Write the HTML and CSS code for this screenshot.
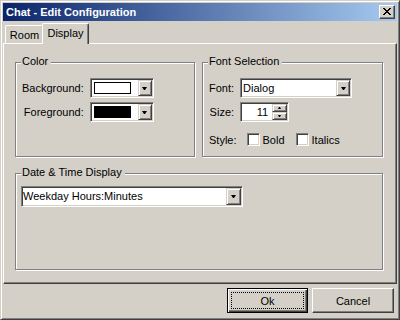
FILE: index.html
```html
<!DOCTYPE html>
<html lang="en">
<head>
  <meta charset="UTF-8">
  <title>Chat - Edit Configuration</title>
  <link rel="stylesheet" href="styles.css">
</head>
<body>
  <div class="window">
    <div class="titlebar">
      <span class="title">Chat - Edit Configuration</span>
      <span class="close">
        <svg width="8" height="7" viewBox="0 0 8 7"><path d="M0 0h2v1H0z M6 0h2v1H6z M1 1h2v1H1z M5 1h2v1H5z M2 2h4v1H2z M3 3h2v1H3z M2 4h4v1H2z M1 5h2v1H1z M5 5h2v1H5z M0 6h2v1H0z M6 6h2v1H6z" fill="#000"/></svg>
      </span>
    </div>
    <div class="main">
      <div class="tabs">
        <div class="tab room">Room</div>
        <div class="tab active">Display</div>
      </div>
      <div class="panel">
        <div class="group">
          <div class="gtitle">Color</div>
          <div class="form">
            <span class="label">Background:</span>
            <div class="combo color-combo">
              <div class="val"><span class="swatch"></span></div>
              <span class="drop"><i class="arrow"></i></span>
            </div>
            <span class="label">Foreground:</span>
            <div class="combo color-combo">
              <div class="val"><span class="swatch black"></span></div>
              <span class="drop"><i class="arrow"></i></span>
            </div>
          </div>
        </div>
        <div class="group">
          <div class="gtitle">Font Selection</div>
          <div class="form">
            <span class="label">Font:</span>
            <div class="combo font-combo">
              <div class="val">Dialog</div>
              <span class="drop"><i class="arrow"></i></span>
            </div>
            <span class="label">Size:</span>
            <div class="spin">
              <div class="spin-val">11</div>
              <div class="spin-btns">
                <span><i class="up"></i></span>
                <span><i class="down"></i></span>
              </div>
            </div>
          </div>
          <div class="style-row">
            <span class="label">Style:</span>
            <label class="check first"><span class="cb"></span>Bold</label>
            <label class="check"><span class="cb"></span>Italics</label>
          </div>
        </div>
        <div class="group wide">
          <div class="gtitle">Date &amp; Time Display</div>
          <div class="combo date-combo">
            <div class="val">Weekday Hours:Minutes</div>
            <span class="drop"><i class="arrow"></i></span>
          </div>
        </div>
      </div>
      <div class="buttons">
        <button class="btn default"><span>Ok</span></button>
        <button class="btn cancel"><span>Cancel</span></button>
      </div>
    </div>
  </div>
</body>
</html>
```

FILE: styles.css
```css
body {
  margin: 0;
  background: #d4d0c8;
  font: 11px "Liberation Sans", Arial, sans-serif;
  color: #000;
}

.window {
  width: 400px;
  height: 320px;
  box-sizing: border-box;
  display: flex;
  flex-direction: column;
  padding: 2px;
  background: #d4d0c8;
  border: 1px solid;
  border-color: #d4d0c8 #404040 #404040 #d4d0c8;
  box-shadow: inset 1px 1px #fff, inset -1px -1px #808080;
}

/* title bar */
.titlebar {
  flex: none;
  height: 18px;
  display: flex;
  align-items: center;
  justify-content: space-between;
  padding: 0 2px 0 3px;
  background: linear-gradient(to right, #0a246a, #a6caf0);
  color: #fff;
  font-weight: bold;
  line-height: 18px;
}
.close {
  width: 16px;
  height: 14px;
  box-sizing: border-box;
  padding: 2px 0 0 3px;
  background: #d4d0c8;
  border: 1px solid;
  border-color: #fff #404040 #404040 #fff;
  box-shadow: inset -1px -1px #808080;
}
.close svg {
  display: block;
}

.main {
  flex: 1;
  display: flex;
  flex-direction: column;
  min-height: 0;
}

/* tabs */
.tabs {
  flex: none;
  display: flex;
  align-items: flex-end;
  height: 20px;
  margin-top: 2px;
  padding-left: 2px;
}
.tab {
  box-sizing: border-box;
  height: 18px;
  padding-top: 3px;
  line-height: 13px;
  text-align: center;
  background: #d4d0c8;
  border: 1px solid;
  border-bottom: 0;
  border-color: #fff #404040 #fff #fff;
  border-radius: 2px 2px 0 0;
  box-shadow: inset -1px 0 #808080;
}
.tab.room {
  width: 39px;
}
.tab.active {
  position: relative;
  z-index: 1;
  width: 47px;
  height: 21px;
  margin: 0 0 -1px -2px;
}

/* tab page */
.panel {
  flex: 1;
  display: grid;
  grid-template-columns: 180px 181px;
  grid-template-rows: 95px 97px;
  column-gap: 7px;
  row-gap: 16px;
  align-content: start;
  padding: 18px 13px 0 11px;
  border: 1px solid;
  border-color: #fff #404040 #404040 #fff;
  box-shadow: inset -1px -1px #808080;
}

.group {
  box-sizing: border-box;
  border: 1px solid #808080;
  box-shadow: inset 1px 1px #fff, 1px 1px #fff;
}
.group.wide {
  grid-column: 1 / 3;
  width: 368px;
}
.gtitle {
  width: fit-content;
  margin: -8px 0 0 5px;
  padding: 0 3px 0 1px;
  line-height: 13px;
  background: #d4d0c8;
}

.form {
  display: grid;
  grid-template-columns: auto auto;
  justify-content: start;
  align-items: center;
  column-gap: 6px;
  row-gap: 4px;
  margin-top: 10px;
  padding-left: 6px;
}
.form .label {
  justify-self: end;
}

/* combo boxes */
.combo {
  box-sizing: border-box;
  display: flex;
  height: 20px;
  padding: 1px;
  background: #fff;
  border: 1px solid;
  border-color: #808080 #fff #fff #808080;
  box-shadow: inset 1px 1px #404040, inset -1px -1px #d4d0c8;
}
.combo .val {
  flex: 1;
  line-height: 16px;
  padding-left: 1px;
  white-space: nowrap;
}
.drop {
  box-sizing: border-box;
  width: 14px;
  display: flex;
  align-items: center;
  justify-content: center;
  background: #d4d0c8;
  border: 1px solid;
  border-color: #d4d0c8 #404040 #404040 #d4d0c8;
  box-shadow: inset 1px 1px #fff, inset -1px -1px #808080;
}
.arrow {
  width: 1px;
  height: 0;
  border-top: 3px solid #000;
  border-left: 2px solid transparent;
  border-right: 2px solid transparent;
}
.color-combo {
  width: 64px;
}
.color-combo .val {
  padding: 0;
}
.swatch {
  display: block;
  box-sizing: border-box;
  width: 37px;
  height: 12px;
  margin: 2px 0 0 2px;
  background: #fff;
  border: 1px solid #000;
}
.swatch.black {
  background: #000;
}
.font-combo {
  width: 112px;
}
.date-combo {
  width: 222px;
  height: 21px;
  margin: 7px 0 0 5px;
}
.date-combo .val {
  padding: 0;
  line-height: 17px;
}
.date-combo .drop {
  width: 15px;
}

/* size spinner */
.spin {
  box-sizing: border-box;
  display: flex;
  width: 49px;
  height: 20px;
  padding: 1px;
  background: #fff;
  border: 1px solid;
  border-color: #808080 #fff #fff #808080;
  box-shadow: inset 1px 1px #404040, inset -1px -1px #d4d0c8;
}
.spin-val {
  flex: 1;
  text-align: right;
  padding-right: 4px;
  line-height: 16px;
}
.spin-btns {
  width: 15px;
  display: flex;
  flex-direction: column;
}
.spin-btns span {
  flex: 1;
  box-sizing: border-box;
  display: flex;
  align-items: center;
  justify-content: center;
  background: #d4d0c8;
  border: 1px solid;
  border-color: #d4d0c8 #404040 #404040 #d4d0c8;
  box-shadow: inset 1px 1px #fff, inset -1px -1px #808080;
}
.spin-btns .up,
.spin-btns .down {
  width: 1px;
  height: 0;
  border-left: 1px solid transparent;
  border-right: 1px solid transparent;
}
.spin-btns .up {
  border-bottom: 2px solid #000;
}
.spin-btns .down {
  border-top: 2px solid #000;
}

/* style checkboxes */
.style-row {
  display: flex;
  align-items: center;
  margin-top: 11px;
  padding-left: 6px;
}
.check {
  display: flex;
  align-items: center;
  gap: 3px;
  margin-left: 11px;
}
.check.first {
  margin-left: 10px;
}
.cb {
  box-sizing: border-box;
  width: 13px;
  height: 13px;
  background: #fff;
  border: 1px solid;
  border-color: #808080 #fff #fff #808080;
  box-shadow: inset 1px 1px #404040, inset -1px -1px #d4d0c8;
}

/* dialog buttons */
.buttons {
  flex: none;
  display: flex;
  justify-content: flex-end;
  gap: 4px;
  height: 25px;
  margin: 4px 3px 4px 0;
}
.btn {
  box-sizing: border-box;
  display: flex;
  width: 81px;
  height: 25px;
  padding: 0;
  font: inherit;
  color: #000;
  background: #d4d0c8;
  border: 1px solid;
  border-color: #fff #404040 #404040 #fff;
  box-shadow: inset -1px -1px #808080;
}
.btn span {
  flex: 1;
  display: flex;
  align-items: center;
  justify-content: center;
  margin: 3px;
  border: 1px solid transparent;
}
.btn.default {
  border-color: #000;
  box-shadow: inset 1px 1px #fff, inset -1px -1px #404040, inset -2px -2px #808080;
}
.btn.default span {
  border: 1px dotted #000;
}
.btn.cancel {
  width: 82px;
}
```
